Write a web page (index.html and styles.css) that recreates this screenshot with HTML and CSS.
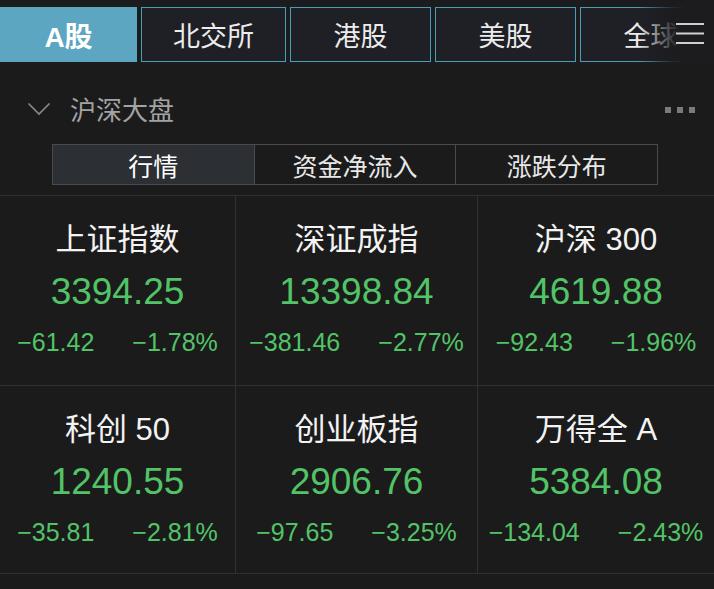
FILE: index.html
```html
<!DOCTYPE html>
<html lang="zh-CN">
<head>
<meta charset="utf-8">
<link rel="stylesheet" href="styles.css">
</head>
<body>
<div class="page">
  <div class="tabs">
    <div class="tab tab-active tab-a">A股</div>
    <div class="tab tab-b">北交所</div>
    <div class="tab">港股</div>
    <div class="tab">美股</div>
    <div class="tab">全球</div>
    <div class="tabs-fade">
      <svg class="menu-icon" width="30" height="24" viewBox="0 0 30 24">
        <rect x="1" y="3" width="28" height="2" fill="#cfcfcf"/>
        <rect x="1" y="12.5" width="28" height="2" fill="#cfcfcf"/>
        <rect x="1" y="22" width="28" height="2" fill="#cfcfcf"/>
      </svg>
    </div>
  </div>

  <div class="section-head">
    <svg class="chev" width="24" height="14" viewBox="0 0 24 14">
      <polyline points="1.5,1.5 12,12 22.5,1.5" fill="none" stroke="#8a8a8a" stroke-width="1.6"/>
    </svg>
    <span class="section-title">沪深大盘</span>
    <span class="dots"><i></i><i></i><i></i></span>
  </div>

  <div class="seg">
    <div class="seg-item seg-active">行情</div>
    <div class="seg-item">资金净流入</div>
    <div class="seg-item">涨跌分布</div>
  </div>

  <div class="grid">
    <div class="cell">
      <div class="c-name">上证指数</div>
      <div class="c-val">3394.25</div>
      <div class="c-chg"><span>−61.42</span><span>−1.78%</span></div>
    </div>
    <div class="cell">
      <div class="c-name">深证成指</div>
      <div class="c-val">13398.84</div>
      <div class="c-chg"><span>−381.46</span><span>−2.77%</span></div>
    </div>
    <div class="cell">
      <div class="c-name">沪深 300</div>
      <div class="c-val">4619.88</div>
      <div class="c-chg"><span>−92.43</span><span>−1.96%</span></div>
    </div>
    <div class="cell">
      <div class="c-name">科创 50</div>
      <div class="c-val">1240.55</div>
      <div class="c-chg"><span>−35.81</span><span>−2.81%</span></div>
    </div>
    <div class="cell">
      <div class="c-name">创业板指</div>
      <div class="c-val">2906.76</div>
      <div class="c-chg"><span>−97.65</span><span>−3.25%</span></div>
    </div>
    <div class="cell">
      <div class="c-name">万得全 A</div>
      <div class="c-val">5384.08</div>
      <div class="c-chg"><span>−134.04</span><span>−2.43%</span></div>
    </div>
  </div>
</div>
</body>
</html>
```
FILE: styles.css
```css
html, body {
  margin: 0;
  padding: 0;
  background: #1b1b1c;
}
body {
  font-family: "Liberation Sans", "Noto Sans CJK SC", sans-serif;
  color: #f0f0f0;
  width: 714px;
  height: 589px;
  overflow: hidden;
}
.page {
  width: 714px;
}
.tabs {
  position: relative;
  display: flex;
  gap: 4px;
  height: 65px;
  padding-top: 7px;
  box-sizing: border-box;
  background: #1c1c1f;
  overflow: hidden;
}
.tab {
  flex: 0 0 141px;
  height: 55px;
  box-sizing: border-box;
  border: 1.5px solid #4a9db7;
  background: #1f2026;
  display: flex;
  align-items: center;
  justify-content: center;
  font-size: 27px;
  color: #ececec;
  font-family: "Noto Sans CJK SC", sans-serif;
}
.tab-a {
  flex-basis: 137px;
  font-family: "Liberation Sans", "Noto Sans CJK SC", sans-serif;
  font-size: 28px;
}
.tab-b {
  flex-basis: 145px;
}
.tab-active {
  background: #5ca6c1;
  border-color: #5ca6c1;
  color: #ffffff;
  font-weight: bold;
}
.tabs-fade {
  position: absolute;
  right: 0;
  top: 0;
  width: 76px;
  height: 65px;
  background: linear-gradient(to right, rgba(28, 28, 31, 0) 0%, rgba(28, 28, 31, 0.85) 45%, #1c1c1f 62%);
}
.menu-icon {
  position: absolute;
  left: 37px;
  top: 20px;
}
.section-head {
  display: flex;
  align-items: center;
  height: 32px;
  padding-top: 27px;
  margin-bottom: 20px;
  padding-left: 27px;
  padding-right: 19px;
}
.chev {
  flex: none;
  margin-top: 2px;
}
.section-title {
  margin-left: 19px;
  font-size: 26px;
  color: #a3a3a3;
  font-family: "Noto Sans CJK SC", sans-serif;
}
.dots {
  margin-left: auto;
  display: flex;
  gap: 6px;
  margin-top: 4px;
}
.dots i {
  display: block;
  width: 6px;
  height: 6px;
  background: #7a7a7a;
}
.seg {
  display: flex;
  margin-left: 52px;
  width: 606px;
  height: 41px;
  box-sizing: border-box;
  border: 1px solid #4a4a4c;
}
.seg-item {
  flex: 1;
  display: flex;
  align-items: center;
  justify-content: center;
  font-size: 25px;
  color: #e8e8e8;
  border-left: 1px solid #4a4a4c;
  font-family: "Noto Sans CJK SC", sans-serif;
}
.seg-item:first-child {
  border-left: none;
}
.seg-active {
  background: #2c2f34;
  color: #ffffff;
}
.grid {
  margin-top: 10px;
  display: grid;
  grid-template-columns: 235px 241px 1fr;
  grid-template-rows: 189px 187px;
  gap: 1px;
  background: #313133;
  border-top: 1px solid #313133;
  border-bottom: 1px solid #313133;
}
.cell {
  background: #1b1b1c;
  display: flex;
  flex-direction: column;
  align-items: center;
  padding-top: 24px;
  box-sizing: border-box;
}
.c-name {
  height: 40px;
  line-height: 40px;
  font-size: 31px;
  color: #f3f3f3;
}
.c-val {
  margin-top: 8px;
  height: 48px;
  line-height: 48px;
  font-size: 37px;
  color: #52c467;
}
.c-chg {
  margin-top: 8px;
  height: 36px;
  line-height: 36px;
  font-size: 25px;
  color: #52c467;
  display: flex;
  gap: 38px;
}
```
